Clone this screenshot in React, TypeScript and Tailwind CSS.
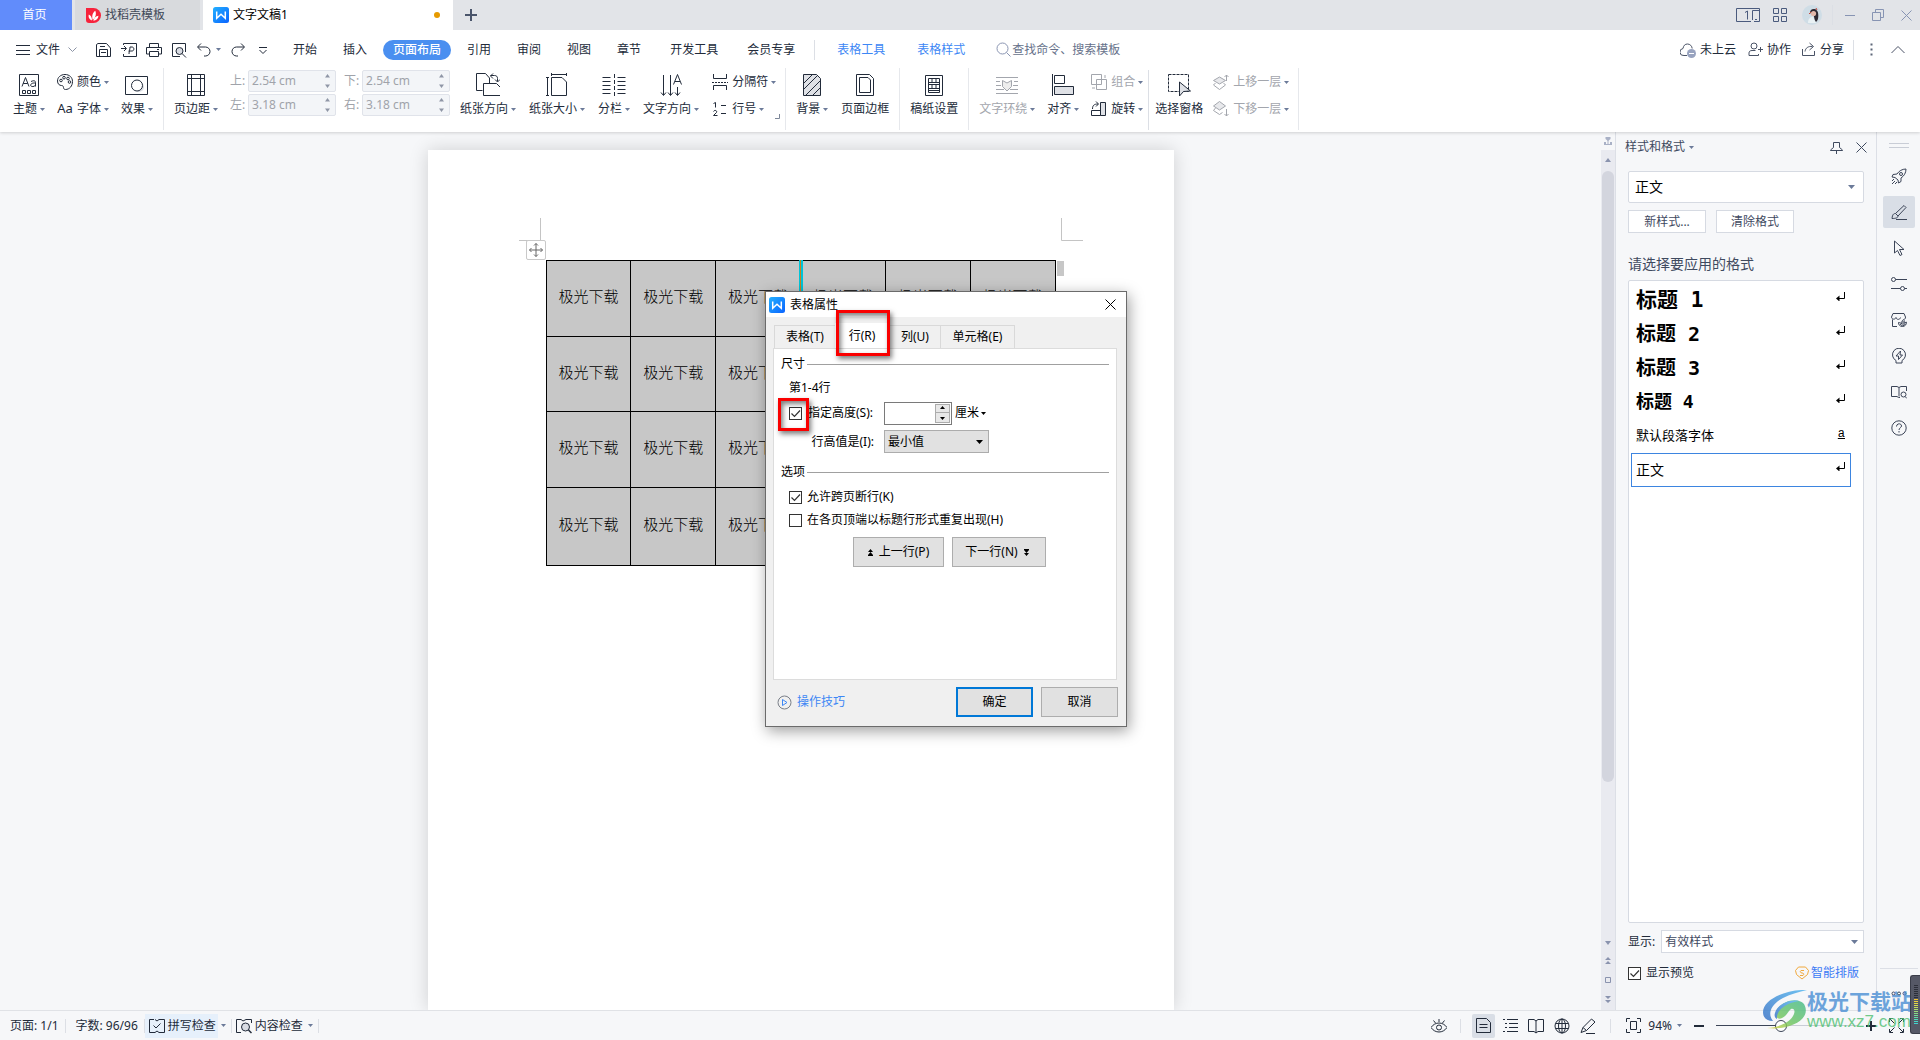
import type { ReactNode } from "react";

interface IconProps {
  children: ReactNode;
  className?: string;
  size?: number;
  height?: number;
}

// Stroke icon on a pixel grid, one unit per pixel
function Icon({ children, className = "", size = 16, height }: IconProps) {
  const h = height ?? size;
  return (
    <svg
      aria-hidden
      width={size}
      height={h}
      viewBox={`0 0 ${size} ${h}`}
      fill="none"
      stroke="currentColor"
      className={`shrink-0 ${className}`}
    >
      {children}
    </svg>
  );
}

function Caret({ className = "text-[#6b7a99]" }: { className?: string }) {
  return (
    <Icon size={5} height={3} className={className}>
      <path d="M0 0h5L2.500 3z" fill="currentColor" stroke="none" />
    </Icon>
  );
}

function WLogo() {
  return (
    <Icon size={16}>
      <defs>
        <linearGradient id="wlogo" x1="0" y1="0" x2="1" y2="1">
          <stop offset="0" stopColor="#23b0ff" />
          <stop offset="1" stopColor="#0a63ff" />
        </linearGradient>
      </defs>
      <rect width="16" height="16" rx="2.500" fill="url(#wlogo)" stroke="none" />
      <path d="M3.700 4.500v6.800L8 7.200l4.300 4.100V4.500" stroke="#fff" strokeWidth="1.500" />
    </Icon>
  );
}

function Divider({ className = "h-6" }: { className?: string }) {
  return <span aria-hidden className={`w-px shrink-0 bg-[#dcdfe5] ${className}`} />;
}

/* ---------- title bar ---------- */

function TitleBar() {
  return (
    <div className="flex h-[30px] bg-[#e2e4e8]">
      <button className="w-[72px] bg-[#618cfb] pr-[3px] text-white">首页</button>
      <button className="ml-[3px] flex w-[125px] items-center gap-1 bg-[#d8dadd] pl-[11px] text-[#3f4858]">
        <Icon size={15}>
          <path d="M0 0h7.500a7.500 7.500 0 0 1 0 15H3a3 3 0 0 1-3-3z" fill="#f7233c" stroke="none" />
          <path d="M6 12.500C3 11.500 2 9 2.800 6.500 5 7.500 6 9.500 6 12.500z" fill="#fff" stroke="none" />
          <path d="M6.800 12C5.500 8.500 6.500 4.500 9.300 2.700c1.300 3 .5 6.800-2.500 9.300z" fill="#fff" stroke="none" />
          <path d="M7.300 12.700c.8-2.700 2.400-4.500 5.200-4.900-.2 3-2.200 4.900-5.200 4.900z" fill="#fff" stroke="none" />
        </Icon>
        找稻壳模板
      </button>
      <button className="ml-[3px] flex w-[250px] items-center gap-1 bg-white pl-[10px] pr-[13px] text-black">
        <WLogo />
        文字文稿1
        <span className="ml-auto size-[6px] rounded-full bg-[#e69a00]" />
      </button>
      <button aria-label="新建" className="ml-3 text-[#4a556b]">
        <Icon size={12}>
          <path d="M6 0v12M0 6h12" strokeWidth="2" />
        </Icon>
      </button>

      <div className="ml-auto flex items-center pr-2 text-[#4a5a7d]">
        <button aria-label="工作区">
          <Icon size={24} height={14}>
            <path d="M15 13.500H.5V.5h23v13H18M16.500 12V2.500H23M19 11.500h2" />
            <path d="M9 4.500 11.500 3v8.500" />
          </Icon>
        </button>
        <button aria-label="应用" className="ml-[13px]">
          <Icon size={14}>
            <path d="M.5.500h5v5h-5zM8.500.500h5v5h-5zM.5 8.500h5v5h-5zM8.500 8.500h5v5h-5z" />
          </Icon>
        </button>
        <button aria-label="账号" className="ml-[15px]">
          <Icon size={20}>
            <circle cx="10" cy="10" r="10" fill="#cfdde6" stroke="none" />
            <path d="M6 18c0-4 2-6 5-6.500l3 6.500z" fill="#e9f1f4" stroke="none" />
            <path d="M8 8c0-3 2-4.500 4.500-4 3 .5 4 4 3.800 7 0 3-.8 5-2.300 6-2-2-1.500-5-2.500-7z" fill="#2e2a33" stroke="none" />
            <circle cx="11.500" cy="8.500" r="2.600" fill="#e3b9ab" stroke="none" />
            <path d="M7 9l2-2M14 3l1 2" stroke="#c4493f" />
          </Icon>
        </button>
        <Divider className="ml-[10px] h-5 bg-[#c8ccd4]" />
        <button aria-label="最小化" className="ml-3 text-[#8794b3]">
          <Icon size={10}>
            <path d="M0 5.500h10" />
          </Icon>
        </button>
        <button aria-label="还原" className="ml-[17px] text-[#8794b3]">
          <Icon size={12}>
            <path d="M3.500 3V.5h8v8H9M.5 3.500h8v8h-8z" />
          </Icon>
        </button>
        <button aria-label="关闭" className="ml-[17px] text-[#8794b3]">
          <Icon size={11}>
            <path d="M.5.500l10 10M10.500.500l-10 10" />
          </Icon>
        </button>
      </div>
    </div>
  );
}

/* ---------- menu row ---------- */

const menuStart = ["开始", "插入", "页面布局", "引用", "审阅", "视图", "章节"];

function MenuRow() {
  return (
    <div className="flex h-[37px] items-center pt-[2px]">
      <button className="ml-4 flex items-center gap-[6px]">
        <Icon size={14}>
          <path d="M0 2.500h14M0 7.500h14M0 11.500h14" />
        </Icon>
        文件
        <Icon size={9} height={6} className="ml-[2px] text-[#8b93a5]">
          <path d="M.5.500l4 4 4-4" />
        </Icon>
      </button>
      <Divider className="ml-[9px]" />
      <div className="ml-[9px] flex items-center gap-[9px]">
        <button aria-label="保存">
          <Icon>
            <path d="M.5 2.500v12h14V6L10.500 1.500H2zM3.500 14V7.500h8V14M4 4.500h5M5 10.500h5" />
          </Icon>
        </button>
        <button aria-label="输出为PDF">
          <Icon>
            <path d="M2.500 3V1.500h13v13h-13V12M0 6.500h5M3 4l2.500 2.500L3 9M8 12c0-3 1-4 1-7h2c2.500 0 2.500 4 0 4H7.500" />
          </Icon>
        </button>
        <button aria-label="打印">
          <Icon>
            <path d="M3.500 5V1.500h9V5M3.500 12H.5V5.500h15V12h-3M3.500 9.500h9v5h-9zM11 7.500h2" />
          </Icon>
        </button>
        <button aria-label="打印预览">
          <Icon>
            <path d="M9 14.500H1.500v-13h13V10" />
            <circle cx="8.500" cy="9" r="3.500" fill="#d9dce3" />
            <path d="M11 11.500l4 4" />
          </Icon>
        </button>
        <button aria-label="撤销" className="flex items-center gap-1">
          <Icon>
            <path d="M5 1.500 1.500 5 5 8.500M2 5h7.500a4.500 4.500 0 0 1 0 9H8" />
          </Icon>
          <Caret />
        </button>
        <button aria-label="恢复">
          <Icon>
            <path d="M11 1.500 14.500 5 11 8.500M14 5H6.500a4.500 4.500 0 0 0 0 9H8" />
          </Icon>
        </button>
        <button aria-label="自定义" className="ml-1">
          <Icon size={8}>
            <path d="M0 1.500h8M.5 4l3.500 3.500L7.500 4" />
          </Icon>
        </button>
      </div>
      <Divider className="ml-[9px]" />
      <nav className="ml-[6px] flex items-center gap-[6px]">
        {menuStart.map((m) => (
          <button
            key={m}
            className={`h-5 rounded-full px-[10px] ${
              m === "页面布局" ? "bg-[#4a8ff0] font-medium text-white" : ""
            }`}
          >
            {m}
          </button>
        ))}
      </nav>
      <nav className="ml-[19px] flex items-center gap-[29px]">
        <button>开发工具</button>
        <button>会员专享</button>
      </nav>
      <Divider className="ml-[19px] h-5" />
      <nav className="ml-[22px] flex items-center gap-8 text-[#3d87f5]">
        <button>表格工具</button>
        <button>表格样式</button>
      </nav>
      <button className="ml-[31px] flex items-center gap-px text-[#66718a]">
        <Icon size={15}>
          <circle cx="6.500" cy="6.500" r="5.500" stroke="#8b96b3" />
          <path d="M10.500 10.500 14.500 14.500" stroke="#8b96b3" />
        </Icon>
        查找命令、搜索模板
      </button>

      <div className="ml-auto flex items-center pr-[15px]">
        <button className="flex items-center gap-1">
          <Icon className="text-[#4a5366]">
            <path d="M7 13.500H4A3.500 3.500 0 0 1 3 6.500C3.500 3.500 5 2 7.500 2S12 4 12.200 6.500" />
            <circle cx="11.500" cy="11.500" r="4.500" fill="#98a3bf" stroke="none" />
            <path d="M9 11.500h5" stroke="#fff" />
          </Icon>
          未上云
        </button>
        <button className="ml-3 flex items-center gap-1">
          <Icon size={15} className="text-[#4a5366]">
            <circle cx="6" cy="4" r="3" />
            <path d="M7.500 8.500H4c-2 0-3 1-3 2.500v2.500h9.500V12M12.500 5v5M10 7.500h5" />
          </Icon>
          协作
        </button>
        <button className="ml-[10px] flex items-center gap-1">
          <Icon size={15} className="text-[#4a5366]">
            <path d="M1.500 7v6.500h12V9M4 9.500C4.500 6 7 4 11.500 4.500M8.500 1l4 3.500-4 3.500" />
          </Icon>
          分享
        </button>
        <Divider className="ml-[9px] h-5" />
        <button aria-label="更多" className="ml-4">
          <Icon size={3} height={14}>
            <path d="M.5 1.500h2M.5 6.500h2M.5 11.500h2" strokeWidth="2" stroke="#5d6678" />
          </Icon>
        </button>
        <button aria-label="收起功能区" className="ml-[18px] text-[#4a5366]">
          <Icon size={14} height={9}>
            <path d="M.5 8 7 1.500 13.500 8" />
          </Icon>
        </button>
      </div>
    </div>
  );
}

/* ---------- ribbon ---------- */

interface RibbonButtonProps {
  label: string;
  caret?: boolean;
  disabled?: boolean;
  children: ReactNode;
}

function BigButton({ label, caret, disabled, children }: RibbonButtonProps) {
  return (
    <button
      className={`flex flex-col items-center gap-[3px] whitespace-nowrap ${disabled ? "text-[#a3a6ad]" : ""}`}
    >
      <Icon size={24}>{children}</Icon>
      <span className="flex items-center gap-[3px] leading-[18px]">
        {label}
        {caret && <Caret />}
      </span>
    </button>
  );
}

function SmallButton({ label, disabled, children }: RibbonButtonProps) {
  return (
    <button
      className={`flex h-5 items-center gap-1 whitespace-nowrap ${disabled ? "text-[#a3a6ad]" : ""}`}
    >
      {children}
      <span className="flex items-center gap-[3px]">
        {label}
        <Caret />
      </span>
    </button>
  );
}

function SmallStack({ children }: { children: ReactNode }) {
  return <div className="-mt-px flex flex-col gap-[7px]">{children}</div>;
}

function MarginField({ label, value }: { label: string; value: string }) {
  return (
    <label className="flex h-[22px] items-center gap-1 text-[#a0a3aa]">
      <span className="w-[14px] whitespace-nowrap">{label}:</span>
      <span className="flex h-full w-[88px] items-center rounded-[2px] border border-[#e0e3ea] bg-[#f3f5f8] pl-[3px] pr-[5px]">
        <input defaultValue={value} className="w-full min-w-0 bg-transparent outline-none" />
        <Icon size={5} height={14} className="text-[#8f96a6]">
          <path d="M0 3.500 2.500 0 5 3.500zM0 10.500h5L2.500 14z" fill="currentColor" stroke="none" />
        </Icon>
      </span>
    </label>
  );
}

function RibbonDivider() {
  return <Divider className="-mt-[5px] h-[62px] bg-[#e6e8ec]" />;
}

function Ribbon() {
  return (
    <div className="flex h-[65px] items-start gap-[10px] pl-[13px] pt-[6px]">
      <div className="flex gap-3">
        <BigButton label="主题" caret>
          <path d="M2.500 1.500h19v21h-19zM5.500 17.500h3v3h-3zM10.500 17.500h3v3h-3zM15.500 17.500h3v3h-3z" />
          <path d="M5 13.500 8.500 4.500 12 13.500M6.200 10.500h4.600M14 8.500c3.500-1.500 4.500-.5 4.500 1v4M18.500 10c-6-.5-6 4-2.500 3.500 1.500 0 2.500-1 2.500-2" />
        </BigButton>
        <SmallStack>
          <SmallButton label="颜色">
            <Icon>
              <path d="M8 .5C3.500.500.500 3.500.500 7c0 3 2 4.500 4 4.500 1.500 0 2 1 2 2s.5 2 2 2c4 0 7-3.500 7-8C15.500 3.500 12.500.500 8 .5z" />
              <circle cx="4" cy="6.500" r="1.300" />
              <circle cx="7" cy="3.700" r="1.300" />
              <circle cx="11" cy="4.500" r="1.300" />
              <circle cx="12.500" cy="8" r="1.300" />
            </Icon>
          </SmallButton>
          <SmallButton label="字体">
            <span className="w-4 text-[13px]">Aa</span>
          </SmallButton>
        </SmallStack>
        <BigButton label="效果" caret>
          <path d="M.5 3.500h22v18H.5z" />
          <circle cx="14" cy="14" r="5" fill="#dcdfe5" stroke="none" />
          <circle cx="12" cy="12.500" r="5.500" fill="#fff" />
        </BigButton>
      </div>
      <RibbonDivider />
      <BigButton label="页边距" caret>
        <path d="M3.500 1.500h17v21h-17zM7.500 1v22M16.500 1v22M3 5.500h18M3 18.500h18" />
      </BigButton>
      <div className="-mt-[3px] ml-[2px] flex flex-col gap-[2px]">
        <div className="flex gap-2">
          <MarginField label="上" value="2.54 cm" />
          <MarginField label="下" value="2.54 cm" />
        </div>
        <div className="flex gap-2">
          <MarginField label="左" value="3.18 cm" />
          <MarginField label="右" value="3.18 cm" />
        </div>
      </div>
      <div className="flex gap-[13px]">
        <BigButton label="纸张方向" caret>
          <path d="M6.500 17.500H.5V.5h9L13.500 5v6" />
          <path d="M7.500 10.500h13l4 4v8h-17z" fill="#fff" />
          <path d="M17 .5l-2.500 2.500L17 5.500M14.500 2.500h4c2 0 3 1 3 3v3M19 6.500 21.500 9 24 6.500" />
        </BigButton>
        <BigButton label="纸张大小" caret>
          <path d="M6.500 4.500h10.500l4.500 4.500v13.500h-15zM6.500 1.500h15M6.500 0v3M21.500 0v3M2.500 4.500v18M1 4.500h3M1 22.500h3" />
        </BigButton>
        <BigButton label="分栏" caret>
          <path d="M.5 4.500h8M.5 8.500h8M.5 12.500h8M.5 16.500h8M.5 20.500h8M15.500 4.500h8M15.500 8.500h8M15.500 12.500h8M15.500 16.500h8M15.500 20.500h8" />
          <path d="M12.500 1v22" strokeDasharray="4 2" />
        </BigButton>
        <BigButton label="文字方向" caret>
          <path d="M4.500 2v20M2 19.500l2.500 3 2.500-3M11.500 2v20M9 19.500l2.500 3 2.500-3M18.500 14v8M16 19.500l2.500 3 2.500-3" />
          <path d="M14.500 11.500 18.500 1.500l4 10M16 8.500h5" />
        </BigButton>
        <SmallStack>
          <SmallButton label="分隔符">
            <Icon>
              <path d="M1.500 0v4.500h13V0M1.500 16v-4.500h13V16" />
              <path d="M0 8.500h16" strokeDasharray="2 1" />
            </Icon>
          </SmallButton>
          <SmallButton label="行号">
            <Icon>
              <path d="M1.500 2.500 3.500 1.500v5M1.500 10.500c1-2 4-1 3 1l-3 3h4M9 4.500h5M9 12.500h5" />
            </Icon>
          </SmallButton>
        </SmallStack>
        <button aria-label="页面设置" className="-ml-[14px] self-end">
          <Icon size={5} className="text-[#7d8799]">
            <path d="M4.500 0v4.500H0" />
          </Icon>
        </button>
      </div>
      <Divider className="-ml-[5px] -mt-[5px] h-[62px] bg-[#e6e8ec]" />
      <div className="flex gap-[13px]">
        <BigButton label="背景" caret>
          <path d="M3.500 1.500h13l4 4v17h-17z" fill="#dfe1e6" />
          <path d="M4 10 12 2M4 16 17.500 2.500M6 22 20 8M13 22l7-7" />
        </BigButton>
        <BigButton label="页面边框">
          <path d="M3.500 1.500h13l4 4v17h-17z" />
          <path d="M6.500 4.500h8.500l2.500 2.500v12.500h-11z" />
        </BigButton>
      </div>
      <RibbonDivider />
      <BigButton label="稿纸设置">
        <path d="M3.500 2.500h17v20h-17z" />
        <path d="M6.500 5.500h11v14h-11zM6.500 9.500h11M6.500 11.500h11M6.500 15.500h11M6.500 17.500h11M10 5.500v4M14 5.500v4M10 11.500v4M14 11.500v4" />
      </BigButton>
      <RibbonDivider />
      <div className="flex gap-3">
        <BigButton label="文字环绕" caret disabled>
          <path d="M1 4.500h22M1 8.500h4M19 8.500h4M1 12.500h5M18 12.500h5M1 16.500h8M15 16.500h8M1 20.500h22" />
          <path d="M7.500 7.500 12 10l4.500-2.500v6L12 18l-4.500-4.500z" fill="#eee" />
        </BigButton>
        <BigButton label="对齐" caret>
          <path d="M1.500 1v22M3.500 2.500h10v8h-10z" />
          <path d="M3.500 13.500h19v8h-19z" fill="#dfe1e6" />
        </BigButton>
        <SmallStack>
          <SmallButton label="组合" disabled>
            <Icon>
              <path d="M.5.500h10v10H.5zM5.500 5.500h10v10h-10zM14 1v3M1 14h3" />
            </Icon>
          </SmallButton>
          <SmallButton label="旋转">
            <Icon>
              <path d="M.5 9.500h9v5h-9z" />
              <path d="M9.500 1.500h5v13h-5z" fill="#dfe1e6" />
              <path d="M1.500 8C1.500 4.500 3 3 7 3M5 .5 7.500 3 5 5.500" />
            </Icon>
          </SmallButton>
        </SmallStack>
      </div>
      <Divider className="-ml-[5px] -mt-[3px] h-[60px]" />
      <div className="-ml-[4px] flex gap-[10px]">
        <BigButton label="选择窗格">
          <path d="M1.500 1.500h20v17h-20z" strokeDasharray="3 1" />
          <path d="M12.500 9v14l4-4.500 7-.5z" fill="#dfe1e6" />
        </BigButton>
        <SmallStack>
          <SmallButton label="上移一层" disabled>
            <Icon>
              <path d="M.5 6.500 6.500 3l6 3.500-6 3.500z" fill="#e8e9ec" />
              <path d="M2.500 9 .5 11l6 4.500 6-4.500-2-2M13.500 7V1M11.500 3l2-2 2 2" />
            </Icon>
          </SmallButton>
          <SmallButton label="下移一层" disabled>
            <Icon>
              <path d="M.5 5 6.500.500l6 4.500-6 4z" fill="#e8e9ec" />
              <path d="M2.500 7 .5 9.500l6 4 3-2M13.500 8v7M11.500 13l2 2 2-2" />
            </Icon>
          </SmallButton>
        </SmallStack>
      </div>
      <Divider className="-ml-px -mt-[5px] h-[62px] bg-[#e6e8ec]" />
    </div>
  );
}

/* ---------- document ---------- */

const rows = [
  { id: 1, height: "h-[76px]" },
  { id: 2, height: "h-[75px]" },
  { id: 3, height: "h-[76px]" },
  { id: 4, height: "h-[78px]" },
];

function Document() {
  return (
    <main className="flex min-w-0 flex-1 justify-center overflow-hidden bg-[#f6f7f9] pt-[18px]">
      <div className="w-[746px] bg-white px-[91px] pt-[68px] shadow-[0_0_18px_rgba(0,0,0,0.16)]">
        <div className="flex h-[23px] justify-between">
          <Icon size={22} height={23} className="text-[#c4c4c4]">
            <path d="M21.500 0v22.500H0" />
          </Icon>
          <Icon size={22} height={23} className="text-[#c4c4c4]">
            <path d="M.5 0v22.500H22" />
          </Icon>
        </div>
        <div className="relative ml-[27px] mt-[19px] w-[511px]">
          <button
            aria-label="移动表格"
            className="absolute -left-5 -top-5 grid size-5 place-items-center rounded-[2px] border border-[#c9c9c9] bg-white text-[#666]"
          >
            <Icon size={14}>
              <path d="M7 .5v13M.5 7h13M5 2.500l2-2 2 2M5 11.500l2 2 2-2M2.500 5l-2 2 2 2M11.500 5l2 2-2 2" />
            </Icon>
          </button>
          <table className="w-[510px] table-fixed border-collapse bg-[#c7c7c7] font-['DejaVu_Sans','Noto_Sans_CJK_SC',sans-serif] text-[15px] font-light leading-5 text-black">
            <tbody>
              {rows.map((r) => (
                <tr key={r.id} className={r.height}>
                  {[0, 1, 2, 3, 4, 5].map((c) => (
                    <td key={c} className="whitespace-nowrap border border-black p-0 pb-[3px] text-center">
                      极光下载
                    </td>
                  ))}
                </tr>
              ))}
            </tbody>
          </table>
          <span aria-hidden className="absolute left-[253px] top-0 flex h-9">
            <span className="w-px bg-[#00c4d8]" />
            <span className="w-px bg-[#c98020]" />
            <span className="w-[2px] bg-[#00c4d8]" />
          </span>
          <span aria-hidden className="absolute -right-[7px] top-px h-[15px] w-[7px] bg-[#c7c7c7]" />
        </div>
      </div>
    </main>
  );
}

function ScrollBar() {
  return (
    <div className="flex w-[14px] flex-col items-center bg-[#e9eaf0] text-[#8a93ae]">
      <div className="flex h-[18px] w-full items-center justify-center bg-[#f6f7f9]">
        <Icon size={8} className="text-[#a9b1c6]">
          <path d="M1.500 0h5v2L4 4 1.500 2z" fill="currentColor" stroke="none" />
          <path d="M0 5h2v2h4V5h2v3H0zM3.500 3h1v4h-1z" fill="currentColor" stroke="none" />
        </Icon>
      </div>
      <Icon size={6} height={4} className="mt-2">
        <path d="M0 4 3 0l3 4z" fill="currentColor" stroke="none" />
      </Icon>
      <div className="mt-[9px] w-3 grow rounded-full bg-[#d3d5de]" />
      <div className="flex h-[228px] flex-col items-center justify-end gap-3 pb-[7px]">
        <Icon size={6} height={4}>
          <path d="M0 0h6L3 4z" fill="currentColor" stroke="none" />
        </Icon>
        <Icon size={6} height={8}>
          <path d="M0 3 3 0l3 3zM0 7l3-3 3 3z" fill="currentColor" stroke="none" />
        </Icon>
        <Icon size={6}>
          <path d="M.5.500h5v5h-5z" />
        </Icon>
        <Icon size={6} height={8}>
          <path d="M0 1h6L3 4zM0 5h6L3 8z" fill="currentColor" stroke="none" />
        </Icon>
      </div>
    </div>
  );
}

/* ---------- form parts ---------- */

function Checkbox({ label, checked, gap = "gap-[6px]" }: { label: string; checked?: boolean; gap?: string }) {
  return (
    <label className={`flex items-center whitespace-nowrap ${gap}`}>
      <span className="grid">
        <input
          type="checkbox"
          defaultChecked={checked}
          className="peer size-[13px] appearance-none border border-[#333] bg-white [grid-area:1/1]"
        />
        <Icon size={13} className="pointer-events-none hidden text-[#333] [grid-area:1/1] peer-checked:block">
          <path d="M2.500 6.500 5.500 9.500 11 3.500" strokeWidth="1.200" />
        </Icon>
      </span>
      {label}
    </label>
  );
}

interface SelectProps {
  label: string;
  value: string;
  className: string;
  caret?: string;
}

function Select({ label, value, className, caret = "mr-2 text-[#6b7a99]" }: SelectProps) {
  return (
    <span className={`grid items-center ${className}`}>
      <select aria-label={label} className="h-full w-full appearance-none outline-none [grid-area:1/1]">
        <option>{value}</option>
      </select>
      <Icon size={7} height={4} className={`pointer-events-none justify-self-end [grid-area:1/1] ${caret}`}>
        <path d="M0 0h7L3.500 4z" fill="currentColor" stroke="none" />
      </Icon>
    </span>
  );
}

/* ---------- styles pane ---------- */

const headings = [
  { name: "标题 1", size: "text-[21px]" },
  { name: "标题 2", size: "text-[20px]" },
  { name: "标题 3", size: "text-[20px]" },
  { name: "标题 4", size: "text-[18px]" },
];

function ReturnMark() {
  return (
    <Icon size={9} className="mb-2 mr-px text-black">
      <path d="M8.500 0v6.500H1" />
      <path d="M3.500 3.500v6L0 6.500z" fill="currentColor" stroke="none" />
    </Icon>
  );
}

function StylesPane() {
  return (
    <aside className="flex w-[261px] flex-col border-l border-[#dcdfe6] bg-[#f6f7f9] pb-[29px] pl-3 pr-3 pt-[6px] text-[#3f4a5f]">
      <div className="-ml-[3px] flex h-[18px] items-center">
        <button className="flex items-center gap-1">
          样式和格式
          <Caret />
        </button>
        <button aria-label="固定" className="ml-auto">
          <Icon size={13}>
            <path d="M3.500 1.500h6v5l3 2.500v.5H.5V9l3-2.500zM6.500 9.500v3.500" />
          </Icon>
        </button>
        <button aria-label="关闭窗格" className="-mr-[3px] ml-[13px]">
          <Icon size={11}>
            <path d="M.5.500l10 10M10.500.500l-10 10" />
          </Icon>
        </button>
      </div>
      <Select
        label="当前样式"
        value="正文"
        className="mt-[15px] h-8 rounded-[2px] border border-[#d6dae2] bg-white pl-[6px] text-sm text-black"
      />
      <div className="mt-[7px] flex gap-[10px]">
        <button className="h-[23px] w-[78px] border border-[#d6dae2] bg-white">新样式...</button>
        <button className="h-[23px] w-[78px] border border-[#d6dae2] bg-white">清除格式</button>
      </div>
      <h2 className="mt-[21px] text-sm leading-5">请选择要应用的格式</h2>
      <ul className="mt-[6px] flex grow flex-col rounded-[2px] border border-[#d6dae2] bg-white py-[2px] pl-[2px] pr-3 text-black">
        {headings.map((h) => (
          <li key={h.name} className="flex h-[34px] items-center justify-between px-[5px]">
            <span className={`font-['DejaVu_Sans_Mono','Noto_Sans_CJK_SC',sans-serif] font-bold leading-6 ${h.size}`}>
              {h.name}
            </span>
            <ReturnMark />
          </li>
        ))}
        <li className="flex h-[34px] items-center justify-between px-[5px] text-[13px]">
          默认段落字体
          <span className="mb-1 mr-px font-['Liberation_Mono',monospace] text-[12px] underline">a</span>
        </li>
        <li className="flex h-[34px] items-center justify-between border border-[#3d85e0] px-[4px] text-sm">
          正文
          <ReturnMark />
        </li>
      </ul>
      <div className="mt-[7px] flex items-center justify-between gap-[6px]">
        <span className="text-[#222b3a]">显示:</span>
        <Select
          label="显示"
          value="有效样式"
          className="h-[23px] grow border border-[#d6dae2] bg-white pl-[3px]"
          caret="mr-[5px] text-[#6b7a99]"
        />
      </div>
      <div className="mt-3 flex items-center justify-between pr-[5px] text-[#222b3a]">
        <Checkbox label="显示预览" checked gap="gap-[5px]" />
        <button className="flex items-center gap-[2px] text-[#3d7bf5]">
          <Icon size={14}>
            <path d="M3.500 1h7l3 3.500-1 4L7 13 1.500 8.500l-1-4z" stroke="#f0a83c" />
            <path d="M9 4.500H6C4.500 5.500 5.500 7 7 7s2.500 1 1 2.500H5" stroke="#f0a83c" />
          </Icon>
          智能排版
        </button>
      </div>
    </aside>
  );
}

const railIcons: { name: string; icon: ReactNode }[] = [
  {
    name: "快捷",
    icon: (
      <>
        <path d="M15 1c-4 0-7 2-9 5l-4 .5L1 9l3 .5L7 12l.5 3 2.500-1.500V10c3-2 5-5 5-9z" />
        <circle cx="10" cy="6" r="1.500" />
        <path d="M1 13l2-2M1 16l3-3M4 16l2-2" />
      </>
    ),
  },
  {
    name: "样式",
    icon: <path d="M4.500 9.500 13 1.500l2 2-8 8.500M4.500 9.500c-2 0-3 1-3.500 5 3.500 0 6-.5 6-2.500zM5 15.500h11" />,
  },
  { name: "选择", icon: <path d="M3.500 1v12l3-2.500 2.500 5 2-1-2.500-5H13z" /> },
  {
    name: "属性",
    icon: (
      <>
        <circle cx="2.500" cy="3.500" r="2" />
        <circle cx="11.500" cy="12.500" r="2" />
        <path d="M4.500 3.500H16M0 12.500h9.500M13.500 12.500H16" />
      </>
    ),
  },
  {
    name: "稻壳",
    icon: (
      <>
        <path d="M6 14.500H1.500V7.500M.5 5 2 1.500h11L14.500 5c0 1.500-.5 2-1.500 2.500M.5 5c0 2.500 3.500 3 4.500.5C5.500 8 9 8 9.500 5.500" />
        <path d="M11.500 14.500c-3 0-4-2-4-4 1.500 0 2.500.5 3 1.500 0-2 .5-3.500 2-4.500 1 1 1 2.500.5 4 .5-.8 1.300-1.300 2.500-1.300 0 2.300-1.500 4.300-4 4.300z" />
        <path d="M12 14V9M9 12l2.500 2M14.500 12 12 14" />
      </>
    ),
  },
  {
    name: "灵感",
    icon: <path d="M5 12.500a6.500 6.500 0 1 1 6 0v2.500H5zM9.500 3 5 8h2.500v3.500L11.500 7H9z" />,
  },
  {
    name: "查阅",
    icon: (
      <>
        <path d="M9 13.500H7.500L6 12.500H.5v-10H6L8 3.500l2-1h5.500V7M8 3.500v9" />
        <circle cx="12.500" cy="10.500" r="2.500" />
        <path d="M14 12.500l2 2" />
      </>
    ),
  },
  {
    name: "帮助",
    icon: (
      <>
        <circle cx="8" cy="8" r="7.200" />
        <path d="M5.500 6.500C5.500 3 10.500 3 10.500 6c0 1.500-2.500 2-2.500 4M8 11v1.500" />
      </>
    ),
  },
];

function SideRail() {
  return (
    <aside className="flex w-11 flex-col items-center border-l border-[#dcdfe6] bg-[#f6f7f9] pb-[14px] pt-[11px] text-[#3c4558]">
      <span aria-hidden className="h-[5px] w-5 border-y border-[#c9cdd6]" />
      <div className="mt-3 flex flex-col gap-1">
        {railIcons.map((r) => (
          <button
            key={r.name}
            aria-label={r.name}
            className={`grid size-8 place-items-center rounded-[2px] ${r.name === "样式" ? "bg-[#d9dee6]" : ""}`}
          >
            <Icon>{r.icon}</Icon>
          </button>
        ))}
      </div>
      <span aria-hidden className="mt-auto h-px w-[38px] bg-[#dcdfe6]" />
      <button aria-label="更多功能" className="mt-[22px]">
        <Icon size={16} height={5}>
          <circle cx="2.500" cy="2.500" r="1.500" />
          <circle cx="8" cy="2.500" r="1.500" />
          <circle cx="13.500" cy="2.500" r="1.500" />
        </Icon>
      </button>
    </aside>
  );
}

/* ---------- status bar ---------- */

function StatusBar() {
  return (
    <footer className="flex h-[30px] items-center border-t border-[#e0e2e6] bg-[#f6f7f9]">
      <span className="ml-[10px]">页面: 1/1</span>
      <Divider className="ml-[6px] h-[14px]" />
      <span className="ml-[10px]">字数: 96/96</span>
      <Divider className="ml-[6px] h-[14px]" />
      <button className="flex items-center gap-[3px]">
        <span className="flex h-6 items-center gap-[3px] bg-[#e6f0fb] pl-1 pr-[2px]">
          <Icon>
            <path d="M5 1.500H.5v13H6L8 13l2 1.500h5.500v-13H10L8 3 6 1.500M4.500 7.500 7 10l4.500-4.500" />
          </Icon>
          拼写检查
        </span>
        <Caret />
      </button>
      <Divider className="ml-[5px] h-[14px]" />
      <button className="ml-1 flex items-center gap-[3px]">
        <Icon>
          <path d="M5 1.500H.5v13H5M10 1.500h5.500V5M5 1.500 7 3l3-1.500" />
          <circle cx="9.500" cy="9" r="4" fill="#d9dce3" />
          <path d="M12.500 12l3 3" strokeWidth="1.500" />
        </Icon>
        内容检查
        <span className="ml-[2px]">
          <Caret />
        </span>
      </button>
      <Divider className="ml-[5px] h-[14px]" />

      <div className="ml-auto flex items-center pr-4">
        <button aria-label="护眼模式">
          <Icon>
            <path d="M0 9.500C4 3.500 12 3.500 16 9.500 12 15.500 4 15.500 0 9.500zM8 1v3M2.500 2.500l2 2.500M13.500 2.500l-2 2.500" />
            <circle cx="8" cy="9.500" r="2.500" />
          </Icon>
        </button>
        <Divider className="ml-[13px] h-[14px]" />
        <button aria-label="页面视图" className="ml-[11px] grid h-6 w-[23px] place-items-center rounded-[2px] bg-[#d9dee6]">
          <Icon size={15}>
            <path d="M.5.500h10l4 4v10H.5zM3.500 6.500h8M3.500 9.500h8" />
          </Icon>
        </button>
        <button aria-label="大纲" className="ml-2">
          <Icon>
            <path d="M0 1.500h2M4 1.500h11M2 5.500h2M6 5.500h9M2 9.500h2M6 9.500h9M0 13.500h2M4 13.500h11" />
          </Icon>
        </button>
        <button aria-label="阅读版式" className="ml-[9px]">
          <Icon>
            <path d="M.5 1.500H6L8 3l2-1.500h5.500v12H10L8 15l-2-1.500H.5zM8 3v12" />
          </Icon>
        </button>
        <button aria-label="Web版式" className="ml-[10px]">
          <Icon>
            <circle cx="8" cy="8" r="7" />
            <ellipse cx="8" cy="8" rx="3.500" ry="7" />
            <path d="M1.500 5.500h13M1.500 10.500h13M8 1v14" />
          </Icon>
        </button>
        <button aria-label="写作模式" className="ml-[10px]">
          <Icon>
            <path d="M1 14.500 3 9.500 11.500 1l3.500 3-8.500 8.500zM3 9.500l3.500 3M6 15.500h9" />
          </Icon>
        </button>
        <Divider className="ml-[14px] h-[14px]" />
        <button aria-label="最佳显示比例" className="ml-[15px]">
          <Icon size={15}>
            <path d="M.5 4V.5H4M11 .5h3.500V4M.5 11v3.500H4M11 14.500h3.500V11M4.500 3.500h6v8h-6z" />
          </Icon>
        </button>
        <button className="ml-[7px] flex items-center gap-[5px]">
          94%
          <Caret />
        </button>
        <button aria-label="缩小" className="ml-3">
          <Icon size={10}>
            <path d="M0 5h10" strokeWidth="2" />
          </Icon>
        </button>
        <input
          type="range"
          aria-label="显示比例"
          defaultValue={45}
          className="ml-3 h-[14px] w-[142px] appearance-none bg-[linear-gradient(to_right,#3c4558_45%,#c9cdd6_45%)] bg-[length:100%_1px] bg-center bg-no-repeat [&::-webkit-slider-thumb]:size-3 [&::-webkit-slider-thumb]:appearance-none [&::-webkit-slider-thumb]:rounded-full [&::-webkit-slider-thumb]:border [&::-webkit-slider-thumb]:border-[#3c4558] [&::-webkit-slider-thumb]:bg-white"
        />
        <button aria-label="放大" className="ml-2">
          <Icon size={10}>
            <path d="M0 5h10M5 0v10" strokeWidth="2" />
          </Icon>
        </button>
        <button aria-label="全屏" className="ml-[13px]">
          <Icon size={15}>
            <path d="M.5 4V.5H4M11 .5h3.500V4M.5 11v3.500H4M11 14.500h3.500V11M1 1l4.500 4.500M14 1 9.500 5.500M1 14l4.500-4.500M14 14 9.500 9.500" />
          </Icon>
        </button>
      </div>
    </footer>
  );
}

/* ---------- table properties dialog ---------- */

function GroupTitle({ children }: { children: ReactNode }) {
  return (
    <div className="flex h-[18px] items-center gap-[2px]">
      {children}
      <span aria-hidden className="h-px grow bg-[#a0a0a0]" />
    </div>
  );
}

const dialogTabs = [
  { name: "表格(T)", width: "w-[61px]" },
  { name: "行(R)", width: "w-[54px]" },
  { name: "列(U)", width: "w-[51px]" },
  { name: "单元格(E)", width: "w-[75px]" },
];

function TableDialog() {
  return (
    <div
      role="dialog"
      aria-label="表格属性"
      className="absolute left-[765px] top-[291px] flex h-[436px] w-[362px] flex-col border border-[#6b6b6b] bg-[#f0f0f0] text-black shadow-[2px_4px_14px_rgba(0,0,0,0.38)]"
    >
      <div className="flex h-[25px] items-center gap-[5px] bg-white pl-[3px] pr-[10px]">
        <WLogo />
        表格属性
        <button aria-label="关闭对话框" className="ml-auto">
          <Icon size={11}>
            <path d="M.5.500l10 10M10.500.500l-10 10" />
          </Icon>
        </button>
      </div>
      <div className="mt-[6px] flex h-[25px] items-end pl-2">
        {dialogTabs.map((t) => (
          <button
            key={t.name}
            className={`border-[#d9d9d9] ${t.width} ${
              t.name === "行(R)" ? "h-[25px] bg-white" : "h-[23px] border-l border-t last:border-r"
            }`}
          >
            {t.name}
          </button>
        ))}
      </div>
      <div className="mx-[7px] mr-[9px] flex h-[332px] flex-col border border-[#dcdcdc] bg-white pl-[7px] pr-[7px] pt-[6px]">
        <GroupTitle>尺寸</GroupTitle>
        <span className="ml-2 mt-[6px] leading-[18px]">第1-4行</span>
        <div className="mt-1 flex h-[24px] items-center pl-2">
          <Checkbox label="指定高度(S):" checked />
          <span className="ml-auto flex h-[23px] w-[68px] items-center border border-[#7a7a7a] bg-white p-px">
            <input aria-label="指定高度" className="h-full w-full min-w-0 outline-none" />
            <span className="flex h-full w-[15px] shrink-0 flex-col items-center justify-around border border-[#acacac] bg-[#e8e8e8]">
              <Caret className="rotate-180 text-black" />
              <span className="h-px w-full bg-[#acacac]" />
              <Caret className="text-black" />
            </span>
          </span>
          <button className="ml-[3px] mr-[123px] flex items-center gap-[2px]">
            厘米
            <Caret className="text-black" />
          </button>
        </div>
        <div className="mt-[5px] flex items-center justify-end gap-[10px] pr-[120px]">
          <span>行高值是(I):</span>
          <Select
            label="行高值是"
            value="最小值"
            className="h-[23px] w-[105px] border border-[#acacac] bg-[#e1e1e1] pl-[3px]"
            caret="mr-[5px] text-black"
          />
        </div>
        <div className="mt-[10px]">
          <GroupTitle>选项</GroupTitle>
        </div>
        <div className="mt-[7px] flex flex-col gap-[5px] pl-2">
          <Checkbox label="允许跨页断行(K)" checked gap="gap-[5px] h-[18px]" />
          <Checkbox label="在各页顶端以标题行形式重复出现(H)" gap="gap-[5px] h-[18px]" />
        </div>
        <div className="mt-2 flex gap-2 pl-[72px]">
          <button className="flex h-[30px] w-[91px] items-center justify-center gap-[6px] border border-[#adadad] bg-[#e1e1e1]">
            <Icon size={5} height={7}>
              <path d="M0 3 2.500 0 5 3zM0 6 2.500 3 5 6zM0 6h5v1H0z" fill="currentColor" stroke="none" />
            </Icon>
            上一行(P)
          </button>
          <button className="flex h-[30px] w-[94px] items-center justify-center gap-[6px] border border-[#adadad] bg-[#e1e1e1] pr-1">
            下一行(N)
            <Icon size={5} height={7}>
              <path d="M0 0h5v1H0zM0 1h5L2.500 4zM0 4h5L2.500 7z" fill="currentColor" stroke="none" />
            </Icon>
          </button>
        </div>
      </div>
      <div className="mt-[7px] flex items-center pl-[11px] pr-2">
        <a href="#tips" className="mr-auto flex items-center gap-[5px] text-[#3d87f5]">
          <Icon size={15}>
            <circle cx="7.500" cy="7.500" r="6.500" stroke="#7a7f88" />
            <path d="M5.500 4.500v6l4.500-3z" />
          </Icon>
          操作技巧
        </a>
        <button className="h-[30px] w-[77px] border-2 border-[#0078d7] bg-[#e1e1e1]">确定</button>
        <button className="ml-2 h-[30px] w-[77px] border border-[#adadad] bg-[#e1e1e1]">取消</button>
      </div>
      {/* callouts around the row tab and the height checkbox */}
      <span
        aria-hidden
        className="absolute left-[70px] top-[18px] h-[46px] w-[54px] border-3 border-[#fa0000] shadow-[2px_3px_5px_rgba(0,0,0,0.5),inset_2px_3px_5px_rgba(0,0,0,0.5)]"
      />
      <span
        aria-hidden
        className="absolute left-3 top-[106px] h-[33px] w-[31px] border-3 border-[#fa0000] shadow-[2px_3px_5px_rgba(0,0,0,0.5),inset_2px_3px_5px_rgba(0,0,0,0.5)]"
      />
    </div>
  );
}

/* ---------- site mark and level meter ---------- */

const meter = [
  "#2c2f3a", "#2c2f3a", "#2c2f3a", "#2c2f3a", "#2c2f3a", "#2c2f3a", "#2c2f3a",
  "#f2c230", "#efd23a", "#e5da45", "#d5dd50", "#c3dd5c", "#aedd6a", "#9add78",
  "#88dd86", "#74dc95", "#62dba5", "#52dab5", "#45d8c4", "#3fd5d0",
];

function SiteMark() {
  return (
    <div className="pointer-events-none absolute bottom-[8px] right-[8px] flex items-start whitespace-nowrap opacity-80">
      <Icon size={44} height={40}>
        <defs>
          <linearGradient id="swirlGreen" x1="1" y1="0" x2="0" y2="1">
            <stop offset="0" stopColor="#3fb98a" />
            <stop offset=".6" stopColor="#6cc45c" />
            <stop offset="1" stopColor="#f0d83a" />
          </linearGradient>
          <linearGradient id="swirlBlue" x1="1" y1="0" x2="0" y2="1">
            <stop offset="0" stopColor="#4db4ef" />
            <stop offset="1" stopColor="#2f6cc4" />
          </linearGradient>
        </defs>
        <path d="M44 0C24-1 0 9 0 22c0 6 4 9 10 9C4 24 8 14 20 8 28 4 36 2 44 0z" fill="url(#swirlBlue)" stroke="none" />
        <path d="M41 14C34 6 16 12 13 22c-1 5 2 8 6 6 5-2 6-7 9-9 3-1 5 2 2 7-4 7-14 11-26 12 20 3 46-8 37-24z" fill="url(#swirlGreen)" stroke="none" />
        <path d="M36 11c-10-2-22 4-24 12-1 3 0 5 2 6-1-8 8-16 22-18z" fill="url(#swirlBlue)" stroke="none" />
      </Icon>
      <div className="flex flex-col">
        <strong className="text-[21px] font-bold leading-[22px] text-[#4a8fd4]">极光下载站</strong>
        <span className="font-['Liberation_Sans',Arial,sans-serif] text-[17px] leading-5 text-[#4fbf72]">
          www.xz7.com
        </span>
      </div>
    </div>
  );
}

function LevelMeter() {
  return (
    <div
      aria-hidden
      className="absolute bottom-[6px] right-0 flex h-[59px] w-[10px] flex-col items-center justify-center gap-px rounded-l-[3px] border border-r-0 border-[#3a3d49] bg-[#555866]"
    >
      {meter.map((c, i) => (
        <span key={i} className="h-px w-1 shrink-0" style={{ backgroundColor: c }} />
      ))}
    </div>
  );
}

export default function App() {
  return (
    <div className="relative flex h-screen min-h-[760px] flex-col overflow-hidden font-['Noto_Sans','Noto_Sans_CJK_SC',sans-serif] text-xs text-[#222b3a]">
      <header className="relative z-10 bg-white shadow-[0_1px_3px_rgba(0,0,0,0.16)]">
        <TitleBar />
        <MenuRow />
        <Ribbon />
      </header>
      <div className="flex min-h-0 flex-1">
        <Document />
        <ScrollBar />
        <StylesPane />
        <SideRail />
      </div>
      <StatusBar />
      <TableDialog />
      <SiteMark />
      <LevelMeter />
    </div>
  );
}
